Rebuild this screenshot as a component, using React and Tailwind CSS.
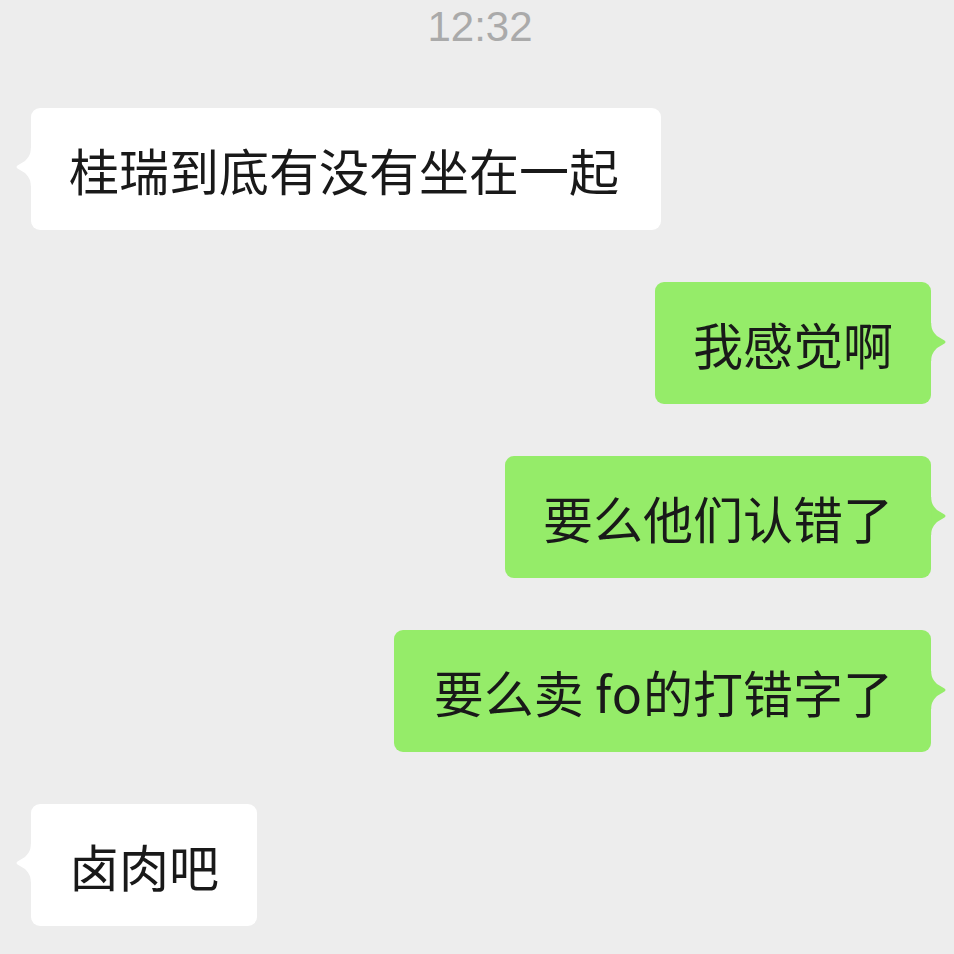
import React from "react";

const cjk = { fontFamily: '"Noto Sans CJK SC", "Noto Sans", sans-serif' };

function Tail({ side, color }) {
  const d = "M0 0 C0 6 3 10 6 13 L13.5 17.5 Q15.5 19 13.5 20.5 L6 25 C3 28 0 32 0 38 Z";
  if (side === "right") {
    return (
      <svg
        className="absolute left-[calc(100%-1px)] top-[41px]"
        width="17"
        height="38"
        viewBox="-1 0 17 38"
      >
        <path d={d} fill={color} />
        <rect x="-1" y="0" width="1.2" height="38" fill={color} />
      </svg>
    );
  }
  return (
    <svg
      className="absolute right-[calc(100%-1px)] top-[40px]"
      width="17"
      height="38"
      viewBox="-1 0 17 38"
      style={{ transform: "scaleX(-1)" }}
    >
      <path d={d} fill={color} />
      <rect x="-1" y="0" width="1.2" height="38" fill={color} />
    </svg>
  );
}

function Bubble({ side, children, pad = "px-[38px]" }) {
  const mine = side === "right";
  const color = mine ? "#95ec69" : "#ffffff";
  return (
    <div className={mine ? "flex justify-end pr-[23px]" : "flex justify-start pl-[31px]"}>
      <div
        className={
          "relative rounded-[9px] py-[36px] text-[50px] leading-[50px] whitespace-nowrap text-[#191919] " +
          pad +
          " " +
          (mine ? "bg-[#95ec69]" : "bg-white")
        }
        style={cjk}
      >
        {children}
        <Tail side={side} color={color} />
      </div>
    </div>
  );
}

export default function App() {
  return (
    <div className="w-[954px] h-[954px] bg-[#ededed] overflow-hidden flex flex-col">
      <div
        className="pt-[6px] pl-[6px] text-center text-[42px] leading-[42px] text-[#aaaaaa]"
        style={{ fontFamily: '"Liberation Sans", Arial, sans-serif' }}
      >
        12:32
      </div>
      <div className="mt-[60px] flex flex-col gap-[52px]">
        <Bubble side="left" pad="pl-[38px] pr-[42px]">桂瑞到底有没有坐在一起</Bubble>
        <Bubble side="right">我感觉啊</Bubble>
        <Bubble side="right">要么他们认错了</Bubble>
        <Bubble side="right" pad="pl-[40px] pr-[38px]">
          要么卖 <span className="tracking-[1px]">fo</span>的打错字了
        </Bubble>
        <Bubble side="left">卤肉吧</Bubble>
      </div>
    </div>
  );
}
